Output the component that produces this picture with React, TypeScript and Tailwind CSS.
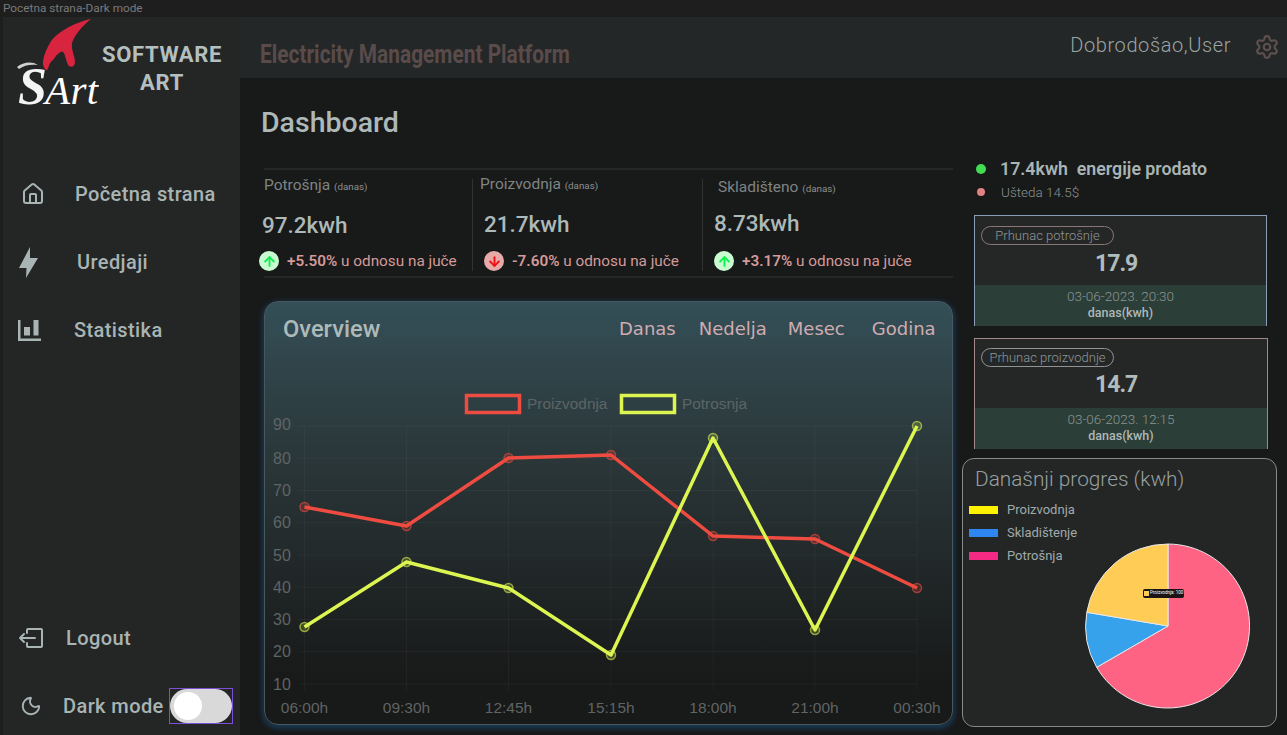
import React from "react";
import { Home, Settings, Moon, ArrowUp, ArrowDown } from "lucide-react";

const font = { fontFamily: "Roboto, 'Noto Sans', sans-serif" };

function Logo() {
  return (
    <svg width="96" height="104" viewBox="3 17 96 104" className="shrink-0">
      <path d="M91 19 C72 23 55 34 50 43 C46 50 43 57 43 63 C43 67 46 71 47 70 C49 68 49 62 53 60 C55 58 56 55 58 54 C60 52 62 51 63 52 C66 55 66 63 69 66 C72 68 75 66 75 62 C75 56 71 50 72 43 C74 36 82 26 91 19 Z" fill="#d8243f" />
      <path d="M17 67 C23 62 32 61 38 65 C31 64 24 65 19 69 Z" fill="#d0d0d0" />
      <text x="18" y="104" fill="#f4f4f4" fontSize="52" fontStyle="italic" fontWeight="700" fontFamily="'Liberation Serif', serif">S</text>
      <text x="45" y="104" fill="#ffffff" fontSize="41" fontStyle="italic" fontFamily="'Liberation Serif', serif">Art</text>
    </svg>
  );
}

function Bolt() {
  return (
    <svg width="21" height="31" viewBox="0 0 21 31" fill="#a9b4b4">
      <path d="M12 0 L1 21 L8.500 21 L8 31 L20 11 L12 11 Z" />
    </svg>
  );
}

function NavBars() {
  return (
    <svg width="24" height="21" viewBox="0 0 24 21" fill="#a9b4b4">
      <rect x="0" y="0" width="2.500" height="21" />
      <rect x="0" y="18.500" width="23" height="2.500" />
      <rect x="6" y="7" width="6" height="8.500" />
      <rect x="15.500" y="0" width="5" height="15.500" />
    </svg>
  );
}

function LogoutIcon() {
  return (
    <svg width="26" height="21" viewBox="0 0 26 21" fill="none" stroke="#a9b4b4" strokeWidth="2" strokeLinecap="round" strokeLinejoin="round">
      <path d="M9 5 V2 a1 1 0 0 1 1 -1 H23 a1 1 0 0 1 1 1 V18 a1 1 0 0 1 -1 1 H10 a1 1 0 0 1 -1 -1 V15" />
      <path d="M17 10 H2 M6 6 L2 10 L6 14" />
    </svg>
  );
}

function Delta({ up, value }: { up: boolean; value: string }) {
  return (
    <div className="flex items-center">
      <span className={up ? "flex h-5 w-5 items-center justify-center rounded-full bg-[#c9fbd0]" : "flex h-5 w-5 items-center justify-center rounded-full bg-[#e8aaa8]"}>
        {up ? <ArrowUp size={15} strokeWidth={3} color="#0cf04c" /> : <ArrowDown size={15} strokeWidth={3} color="#f01010" />}
      </span>
      <span className="ml-[8px] whitespace-nowrap text-[15.300px] leading-[20px] text-[#d49a9a]">
        <span className="font-semibold">{value}</span> u odnosu na juče
      </span>
    </div>
  );
}

function Stats() {
  return (
    <div className="ml-[3px] mt-[26px] grid h-[110px] w-[689px] grid-cols-[209px_230px_250px] border-y-2 border-[#252727]">
      <div className="my-[9px] border-r border-[#303232]">
        <div className="-mt-[2px] whitespace-nowrap text-[15.500px] leading-[16px] text-[#7f8484]">Potrošnja <span className="text-[9.800px] text-[#8d9292]">(danas)</span></div>
        <div className="-ml-[2px] mt-[16px] text-[22.500px] font-medium leading-[28px] text-[#adb8b8]">97.2kwh</div>
        <div className="-ml-[5px] mt-[12px]"><Delta up value="+5.50%" /></div>
      </div>
      <div className="my-[9px] border-r border-[#303232] pl-[7px]">
        <div className="-mt-[3px] whitespace-nowrap text-[15.500px] leading-[16px] text-[#7f8484]">Proizvodnja <span className="text-[9.800px] text-[#8d9292]">(danas)</span></div>
        <div className="ml-[4px] mt-[16px] text-[22.500px] font-medium leading-[28px] text-[#adb8b8]">21.7kwh</div>
        <div className="ml-[4px] mt-[13px]"><Delta up={false} value="-7.60%" /></div>
      </div>
      <div className="my-[9px] pl-[15px]">
        <div className="whitespace-nowrap text-[15.500px] leading-[16px] text-[#7f8484]">Skladišteno <span className="text-[9.800px] text-[#8d9292]">(danas)</span></div>
        <div className="-ml-[4px] mt-[12px] text-[22.500px] font-medium leading-[28px] text-[#adb8b8]">8.73kwh</div>
        <div className="-ml-[4px] mt-[14px]"><Delta up value="+3.17%" /></div>
      </div>
    </div>
  );
}

const xs = [304.5, 406.5, 508.5, 611, 713, 815, 917];
const labels = ["06:00h", "09:30h", "12:45h", "15:15h", "18:00h", "21:00h", "00:30h"];
const red = [507, 526, 458, 455, 536, 539, 588];
const yellow = [627, 562, 588, 655, 438, 630, 426];
const ticks = [90, 80, 70, 60, 50, 40, 30, 20, 10];
const tickY = (t: number) => 426 + ((90 - t) / 80) * 258;

function Series({ ys, color }: { ys: number[]; color: string }) {
  return (
    <g>
      <polyline points={xs.map((x, i) => `${x},${ys[i]}`).join(" ")} fill="none" stroke={color} strokeWidth="3.500" strokeLinejoin="round" />
      {xs.map((x, i) => (
        <circle key={x} cx={x} cy={ys[i]} r="4.500" fill={color} fillOpacity="0.2" stroke={color} strokeOpacity="0.6" strokeWidth="1.500" />
      ))}
    </g>
  );
}

function Chart() {
  const axis = "'Liberation Sans', sans-serif";
  return (
    <svg width="687" height="369" viewBox="265 355 687 369" className="block">
      {ticks.map((t) => (
        <line key={t} x1="298" x2="917" y1={tickY(t)} y2={tickY(t)} stroke="#ffffff" strokeOpacity="0.04" />
      ))}
      {xs.map((x) => (
        <line key={x} x1={x} x2={x} y1="426" y2="690" stroke="#ffffff" strokeOpacity="0.035" />
      ))}
      {ticks.map((t) => (
        <text key={t} x="273" y={(t === 90 ? tickY(t) - 2 : tickY(t)) + 5.5} fontSize="16" fill="#5f6464" fontFamily={axis}>{t}</text>
      ))}
      {labels.map((l, i) => (
        <text key={l} x={xs[i]} y="713" fontSize="15.500" textAnchor="middle" fill="#5f6464" fontFamily={axis}>{l}</text>
      ))}
      <rect x="466.500" y="395.500" width="53" height="17" fill="none" stroke="#ef4c41" strokeWidth="3.500" />
      <text x="527" y="409" fontSize="15.400" fill="#5c6566" fontFamily={axis}>Proizvodnja</text>
      <rect x="621.500" y="395.500" width="53" height="17" fill="none" stroke="#dcf550" strokeWidth="3.500" />
      <text x="682" y="409" fontSize="15.400" fill="#5c6566" fontFamily={axis}>Potrosnja</text>
      <Series ys={red} color="#ef4c41" />
      <Series ys={yellow} color="#dcf550" />
    </svg>
  );
}

function PeakCard({ title, value, date, border, valueOffset, pillPad }: { title: string; value: string; date: string; border: string; valueOffset: string; pillPad: string }) {
  return (
    <div className={border}>
      <div className="h-[69px] bg-[#252727] pl-[6px] pt-[10px]">
        <div className={pillPad}>{title}</div>
        <div className={valueOffset}>{value}</div>
      </div>
      <div className="flex h-[41px] flex-col items-center bg-[#2c3e38] pt-[2px]">
        <div className="text-[13.500px] font-light leading-[18px] text-[#8b9492]">{date}</div>
        <div className="text-[12.500px] font-medium leading-[15px] text-[#adb8b8]">danas(kwh)</div>
      </div>
    </div>
  );
}

function Pie() {
  const cx = 83;
  const cy = 83;
  const r = 82;
  return (
    <div className="relative ml-[122px] mt-[-20px] h-[166px] w-[166px]">
      <svg width="166" height="166" viewBox="0 0 166 166" className="block">
        <path d={`M${cx} ${cy} L${cx} ${cy - r} A${r} ${r} 0 1 1 11.700 124.300 Z`} fill="#ff6384" stroke="#e8e8e8" />
        <path d={`M${cx} ${cy} L11.700 124.300 A${r} ${r} 0 0 1 1.800 69.300 Z`} fill="#36a2eb" stroke="#e8e8e8" />
        <path d={`M${cx} ${cy} L1.800 69.300 A${r} ${r} 0 0 1 ${cx} ${cy - r} Z`} fill="#ffcd56" stroke="#e8e8e8" />
      </svg>
      <div className="absolute left-[58px] top-[46px] flex h-[9px] items-center whitespace-nowrap rounded-[2px] bg-[#1c1414] px-[1px] text-[4.500px] leading-none text-white">
        <span className="mr-[1px] h-[5px] w-[5px] bg-[#ffcd56]" />Proizvodnja: 100
      </div>
    </div>
  );
}

export default function App() {
  return (
    <div style={font} className="flex h-[735px] w-[1287px] flex-col overflow-hidden bg-[#1e1e1e]">
      <div className="h-[17px] whitespace-nowrap pl-[3px] text-[11.800px] leading-[17px] text-[#7a7a7a]">Pocetna strana-Dark mode</div>
      <div className="ml-[3px] flex min-h-0 flex-1">
        <aside className="flex w-[237px] shrink-0 flex-col bg-[#242626] text-[20px] font-medium tracking-[0.4px] text-[#a9b4b4]">
          <div className="flex h-[95px] items-start">
            <Logo />
            <div className="ml-[3px] mt-[24px] flex flex-col items-center text-[22px] font-bold leading-[28px] tracking-[0.65px] text-[#b4bfbf]">
              <span>SOFTWARE</span>
              <span>ART</span>
            </div>
          </div>
          <div className="ml-[18px] mt-[70px] flex h-[24px] items-center">
            <Home size={24} strokeWidth={2} />
            <span className="ml-[30px]">Početna strana</span>
          </div>
          <div className="ml-[15px] mt-[44px] flex h-[24px] items-center">
            <Bolt />
            <span className="ml-[38px]">Uredjaji</span>
          </div>
          <div className="ml-[15px] mt-[44px] flex h-[24px] items-center">
            <NavBars />
            <span className="ml-[32px]">Statistika</span>
          </div>
          <div className="ml-[15px] mt-[284px] flex h-[24px] items-center">
            <LogoutIcon />
            <span className="ml-[22px]">Logout</span>
          </div>
          <div className="ml-[17px] mt-[38px] flex h-[36px] items-center">
            <Moon size={22} strokeWidth={2} />
            <span className="ml-[21px] whitespace-nowrap">Dark mode</span>
            <span className="ml-[5px] flex h-[36px] w-[64px] shrink-0 items-center border border-[#7b4fd6] bg-[#242626]">
              <span className="flex h-[34px] w-full items-center rounded-full bg-[#d9d9d9] pl-[4px]">
                <span className="h-[28px] w-[28px] rounded-full bg-white" />
              </span>
            </span>
          </div>
        </aside>
        <div className="flex min-w-0 flex-1 flex-col bg-[#181919]">
          <header className="flex h-[61px] shrink-0 items-start bg-[#242727]">
            <div className="ml-[20px] mt-[23px] origin-left scale-x-[0.835] whitespace-nowrap text-[25px] font-bold leading-[30px] text-[#5a4b4b]">Electricity Management Platform</div>
            <div className="ml-auto mt-[14px] whitespace-nowrap text-[20px] font-light leading-[28px] tracking-[0.6px] text-[#9aa5a5]">Dobrodošao,User</div>
            <Settings size={26} strokeWidth={2} color="#5f5050" className="ml-[23px] mr-[7px] mt-[17px]" />
          </header>
          <div className="flex min-h-0 flex-1">
            <main className="w-[722px] shrink-0 pl-[21px]">
              <h1 className="mt-[26px] text-[28.500px] font-medium leading-[38px] text-[#adb8b8]">Dashboard</h1>
              <Stats />
              <section className="ml-[3px] mt-[23px] h-[424px] w-[689px] overflow-hidden rounded-[14px] border border-[#49585c] bg-gradient-to-b from-[#344f57] via-[#2a3638] via-[38%] to-[#181919] to-[90%] shadow-[0_2px_5px_2px_#18374e]">
                <div className="flex h-[53px] items-start pl-[18px] pt-[12px]">
                  <div className="w-[97px] whitespace-nowrap text-[23.700px] font-medium leading-[30px] text-[#aebaba]">Overview</div>
                  <div className="ml-[239px] flex pt-[1px] text-[18px] leading-[28px] text-[#d0acb1] [font-family:DejaVu_Sans,sans-serif]">
                    <span>Danas</span>
                    <span className="ml-[23px]">Nedelja</span>
                    <span className="ml-[21px]">Mesec</span>
                    <span className="ml-[27px]">Godina</span>
                  </div>
                </div>
                <Chart />
              </section>
            </main>
            <aside className="min-w-0 flex-1">
              <div className="ml-[14px] mt-[80px] flex items-center">
                <span className="h-[10px] w-[10px] rounded-full bg-[#41de51]" />
                <span className="ml-[14px] whitespace-nowrap text-[17.800px] font-semibold leading-[22px] text-[#a9b4b4]">17.4kwh&nbsp; energije prodato</span>
              </div>
              <div className="ml-[15px] mt-[1px] flex items-center">
                <span className="h-[8px] w-[8px] rounded-full bg-[#e08282]" />
                <span className="ml-[16px] text-[13.500px] font-light leading-[22px] text-[#8c9292]">Ušteda 14.5$</span>
              </div>
              <div className="ml-[12px] mt-[12px] w-[293px]">
                <PeakCard
                  title="Prhunac potrošnje"
                  value="17.9"
                  date="03-06-2023. 20:30"
                  border="border border-b-0 border-[#8c9db8]"
                  valueOffset="ml-[114px] mt-[5px] text-[23px] font-bold leading-[28px] tracking-[-1px] text-[#b0bbbb]"
                  pillPad="flex h-[19px] w-[133px] items-center justify-center rounded-full border border-[#8a7676] text-[13px] font-light text-[#8f9797]"
                />
              </div>
              <div className="ml-[12px] mt-[12px] w-[294px]">
                <PeakCard
                  title="Prhunac proizvodnje"
                  value="14.7"
                  date="03-06-2023. 12:15"
                  border="border border-b-0 border-[#a38a8a]"
                  valueOffset="ml-[114px] mt-[4px] text-[23px] font-bold leading-[28px] tracking-[-1px] text-[#b0bbbb]"
                  pillPad="-mt-[1px] flex h-[19px] w-[133px] items-center justify-center whitespace-nowrap rounded-full border border-[#8f9494] text-[13px] font-light text-[#8f9797]"
                />
              </div>
              <div className="mt-[9px] h-[269px] w-[315px] rounded-[12px] border border-[#858a8a] bg-[#242626] pt-[6px]">
                <div className="whitespace-nowrap pl-[12px] text-[20.800px] font-light leading-[28px] text-[#97a1a1]">Današnji progres (kwh)</div>
                <div className="mt-[9px] flex flex-col gap-[8px] pl-[6px] text-[13px] leading-[15px] text-[#a0aaaa]">
                  <div className="flex items-center"><span className="mr-[9px] h-[8px] w-[29px] bg-[#fff200]" />Proizvodnja</div>
                  <div className="flex items-center"><span className="mr-[9px] h-[8px] w-[29px] bg-[#2e86f2]" />Skladištenje</div>
                  <div className="flex items-center"><span className="mr-[9px] h-[8px] w-[29px] bg-[#f42a85]" />Potrošnja</div>
                </div>
                <Pie />
              </div>
            </aside>
          </div>
        </div>
      </div>
    </div>
  );
}
